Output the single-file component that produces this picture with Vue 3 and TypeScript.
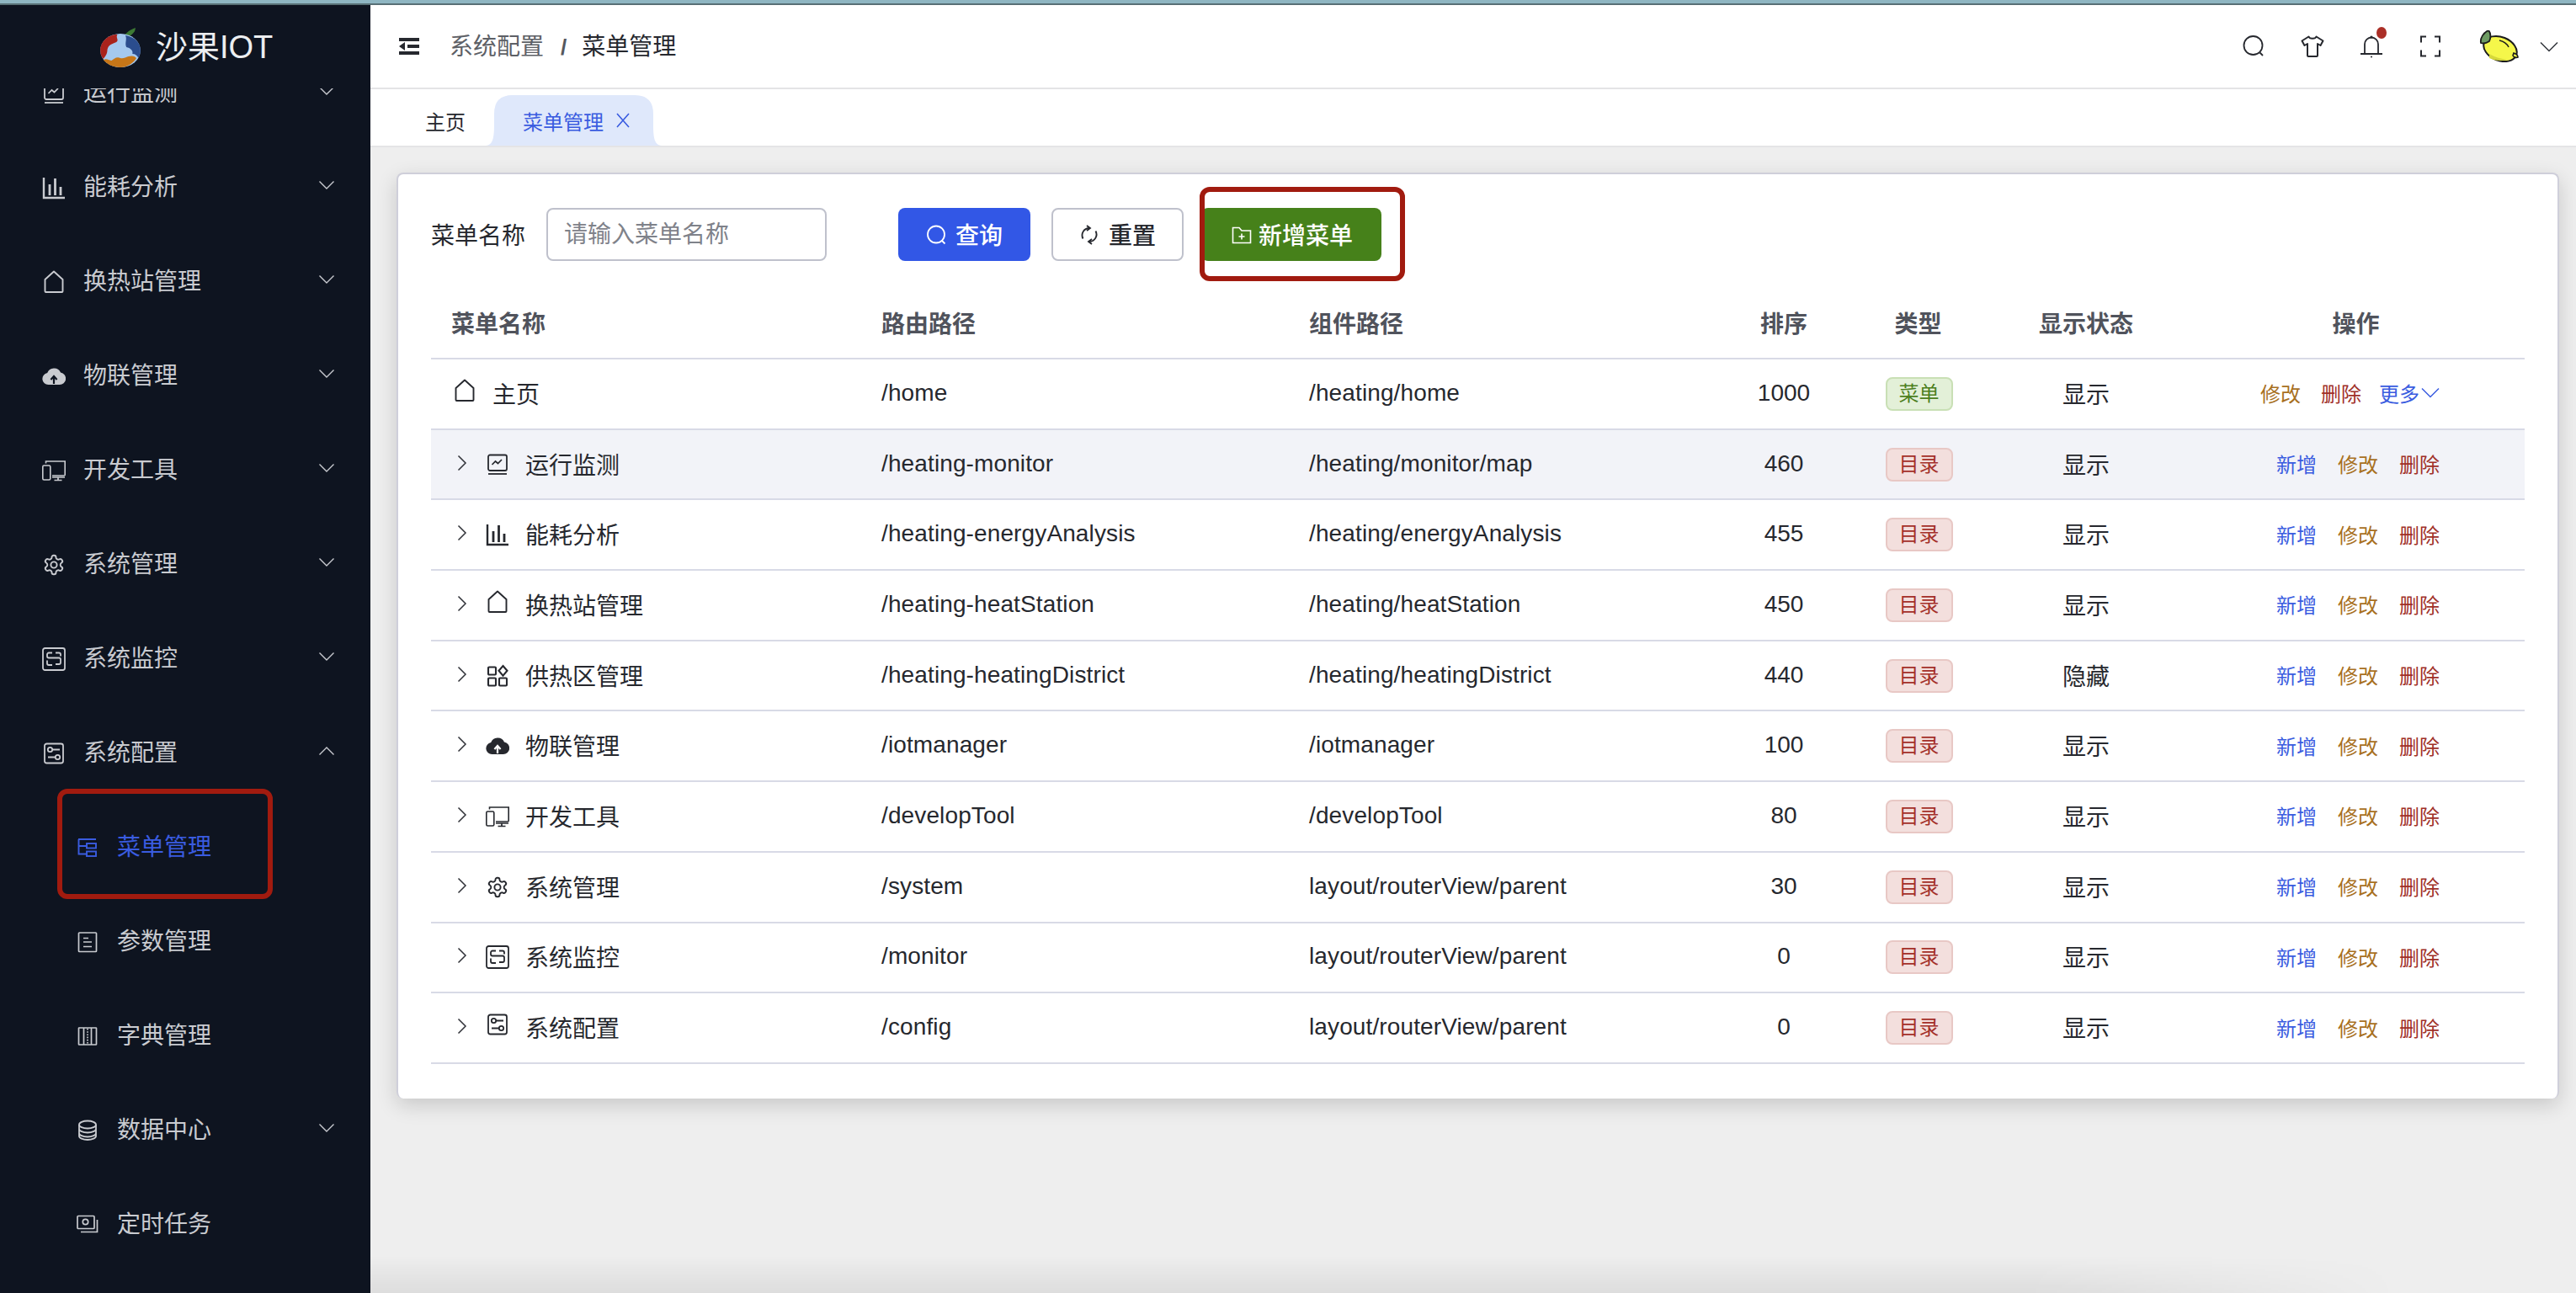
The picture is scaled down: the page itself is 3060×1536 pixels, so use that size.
<script setup lang="ts">
interface MenuItem { label: string; icon: string; sub?: boolean; arrow?: 'down' | 'up'; active?: boolean }
interface Row { name: string; icon: string; path: string; comp: string; order: string; type: string; show: string; leaf?: boolean; hover?: boolean }

const icons: Record<string, string> = {
  monitor: '<rect x="3" y="2.500" width="22" height="18.500" rx="2" fill="none" stroke="currentColor" stroke-width="1.800"/><path d="M7.500 14l4-4 3 2.500 4.500-4.500" fill="none" stroke="currentColor" stroke-width="1.700"/><path d="M3 25h22" stroke="currentColor" stroke-width="1.800"/>',
  bars: '<path d="M2 2v24h25" fill="none" stroke="currentColor" stroke-width="2.400"/><path d="M9 10v13M15.500 3v20M22 13v10" fill="none" stroke="currentColor" stroke-width="2.800"/>',
  home: '<path d="M3.500 25V11L14 1.500 24.500 11v14a1 1 0 0 1-1 1h-19a1 1 0 0 1-1-1z" fill="none" stroke="currentColor" stroke-width="1.900" stroke-linejoin="round"/>',
  grid: '<g fill="none" stroke="currentColor" stroke-width="2.100"><rect x="3" y="3.500" width="9" height="9" rx="1"/><rect x="3" y="16.500" width="9" height="9" rx="1"/><rect x="16" y="16.500" width="9" height="9" rx="1"/><path d="M20.500 2l5 5.800-5 5.800-5-5.800z"/></g>',
  cloud: '<path d="M7.500 24a7 7 0 0 1-1.300-13.900A8.500 8.500 0 0 1 22 9.500 7.300 7.300 0 0 1 20.500 24z" fill="currentColor"/><path d="M14 23v-8.500M10.400 18L14 14l3.600 4" fill="none" stroke="var(--icon-knock, #fff)" stroke-width="2.200"/>',
  device: '<g fill="none" stroke="currentColor" stroke-width="1.600"><rect x="0.800" y="8" width="9" height="17" rx="1.500"/><path d="M4.500 5.500V3h22.700v16a1 1 0 0 1-1 1H12"/><path d="M12 22h15M14.500 25.500h9M19 22v3.500" stroke-width="1.700"/></g>',
  gear: '<g transform="translate(.500 .500) scale(1.125)" fill="none" stroke="currentColor" stroke-width="1.700"><path d="M12.220 2h-.44a2 2 0 0 0-2 2v.18a2 2 0 0 1-1 1.730l-.43.25a2 2 0 0 1-2 0l-.15-.08a2 2 0 0 0-2.730.73l-.22.38a2 2 0 0 0 .73 2.730l.15.1a2 2 0 0 1 1 1.720v.51a2 2 0 0 1-1 1.740l-.15.09a2 2 0 0 0-.73 2.730l.22.38a2 2 0 0 0 2.730.73l.15-.08a2 2 0 0 1 2 0l.43.25a2 2 0 0 1 1 1.730V20a2 2 0 0 0 2 2h.44a2 2 0 0 0 2-2v-.18a2 2 0 0 1 1-1.730l.43-.25a2 2 0 0 1 2 0l.15.08a2 2 0 0 0 2.730-.73l.22-.39a2 2 0 0 0-.73-2.730l-.15-.08a2 2 0 0 1-1-1.740v-.5a2 2 0 0 1 1-1.740l.15-.09a2 2 0 0 0 .73-2.730l-.22-.38a2 2 0 0 0-2.730-.73l-.15.08a2 2 0 0 1-2 0l-.43-.25a2 2 0 0 1-1-1.730V4a2 2 0 0 0-2-2z"/><circle cx="12" cy="12" r="3.200"/></g>',
  chain: '<g fill="none" stroke="currentColor" stroke-width="1.800"><rect x="1" y="1" width="26" height="26" rx="2.500"/><path d="M12 6.500H8a2 2 0 0 0-2 2v2a2 2 0 0 0 2 2h12a2 2 0 0 1 2 2v3.500a2 2 0 0 1-2 2h-4M16 6.500h4a2 2 0 0 1 2 2v2M6 15.500v3.500a2 2 0 0 0 2 2h4"/></g>',
  config: '<g fill="none" stroke="currentColor" stroke-width="1.800"><rect x="3" y="2.500" width="22" height="23" rx="2.500"/><circle cx="9.500" cy="9.500" r="2.700"/><path d="M12.200 9.500H21M7 18.500h8.800"/><circle cx="18.500" cy="18.500" r="2.700"/></g>',
  tree: '<g fill="none" stroke="currentColor" stroke-width="1.900"><path d="M3.500 4v17.500h9M3.500 12h9M3 4h21"/><rect x="13" y="9" width="11" height="5.500"/><rect x="13" y="18.500" width="11" height="5.500"/></g>',
  doc: '<g fill="none" stroke="currentColor" stroke-width="1.700"><rect x="3.500" y="3" width="21" height="22.500" rx=".8"/><path d="M9 9.500h6M9 14h10M9 19.500h10"/></g>',
  dict: '<g fill="none" stroke="currentColor" stroke-width="1.700"><rect x="3.500" y="4" width="21" height="20" rx=".5"/><path d="M9.500 4v20M18.500 4v20"/><path d="M14 5v18" stroke-dasharray="1.600 1.600"/></g>',
  db: '<g fill="none" stroke="currentColor" stroke-width="1.800"><ellipse cx="14" cy="7" rx="10" ry="4.500"/><path d="M4 7v5c0 2.500 4.500 4.500 10 4.500s10-2 10-4.500V7M4 12v5c0 2.500 4.500 4.500 10 4.500s10-2 10-4.500v-5M4 17v3.500C4 23 8.500 25 14 25s10-2 10-4.500V17"/></g>',
  cron: '<g fill="none" stroke="currentColor" stroke-width="1.700"><rect x="2" y="3.500" width="20" height="15" rx="1"/><circle cx="11.500" cy="10.500" r="3.200"/><path d="M6 22.500h19.500V8"/></g>',
}

const menu: MenuItem[] = [
  { label: '运行监测', icon: 'monitor', arrow: 'down' },
  { label: '能耗分析', icon: 'bars', arrow: 'down' },
  { label: '换热站管理', icon: 'home', arrow: 'down' },
  { label: '物联管理', icon: 'cloud', arrow: 'down' },
  { label: '开发工具', icon: 'device', arrow: 'down' },
  { label: '系统管理', icon: 'gear', arrow: 'down' },
  { label: '系统监控', icon: 'chain', arrow: 'down' },
  { label: '系统配置', icon: 'config', arrow: 'up' },
  { label: '菜单管理', icon: 'tree', sub: true, active: true },
  { label: '参数管理', icon: 'doc', sub: true },
  { label: '字典管理', icon: 'dict', sub: true },
  { label: '数据中心', icon: 'db', sub: true, arrow: 'down' },
  { label: '定时任务', icon: 'cron', sub: true },
]

const rows: Row[] = [
  { name: '主页', icon: 'home', path: '/home', comp: '/heating/home', order: '1000', type: '菜单', show: '显示', leaf: true },
  { name: '运行监测', icon: 'monitor', path: '/heating-monitor', comp: '/heating/monitor/map', order: '460', type: '目录', show: '显示', hover: true },
  { name: '能耗分析', icon: 'bars', path: '/heating-energyAnalysis', comp: '/heating/energyAnalysis', order: '455', type: '目录', show: '显示' },
  { name: '换热站管理', icon: 'home', path: '/heating-heatStation', comp: '/heating/heatStation', order: '450', type: '目录', show: '显示' },
  { name: '供热区管理', icon: 'grid', path: '/heating-heatingDistrict', comp: '/heating/heatingDistrict', order: '440', type: '目录', show: '隐藏' },
  { name: '物联管理', icon: 'cloud', path: '/iotmanager', comp: '/iotmanager', order: '100', type: '目录', show: '显示' },
  { name: '开发工具', icon: 'device', path: '/developTool', comp: '/developTool', order: '80', type: '目录', show: '显示' },
  { name: '系统管理', icon: 'gear', path: '/system', comp: 'layout/routerView/parent', order: '30', type: '目录', show: '显示' },
  { name: '系统监控', icon: 'chain', path: '/monitor', comp: 'layout/routerView/parent', order: '0', type: '目录', show: '显示' },
  { name: '系统配置', icon: 'config', path: '/config', comp: 'layout/routerView/parent', order: '0', type: '目录', show: '显示' },
]

const columns: string[] = ['菜单名称', '路由路径', '组件路径', '排序', '类型', '显示状态', '操作']
</script>

<template>
  <div class="page">
    <div class="strip"></div>
    <div class="shell">
      <aside class="sidebar">
        <div class="logo">
          <svg class="apple" viewBox="4 0 42 47" width="50" height="47" preserveAspectRatio="none">
            <path d="M26 13C30 7 33 3 40 0c0 6-5 10-12 14z" fill="#3d7a34"/>
            <circle cx="25" cy="27" r="20" fill="#a5c9ef"/>
            <path d="M5 27C5 16 13 8 22 8c-2 4 2 6-1 9-4 2-8 3-9 9 0 5-2 8-4 11-2-3-3-6-3-10z" fill="#a9231c"/>
            <path d="M30 9c10 2 15 9 15 18 0 3-1 7-2 9-1-3-3-5-6-5 1-4-2-7-6-8-2-5 1-9-1-14z" fill="#2b4d8e"/>
            <path d="M8 38c3-2 5 0 8 1 3-2 5-5 9-3 3 1 5-1 8-2 3-1 6-1 8 2-3 6-9 11-16 11S11 43 8 38z" fill="#c67618"/>
          </svg>
          <span class="brand">沙果IOT</span>
        </div>
        <div class="menu-clip">
          <nav class="menu">
            <div
              v-for="item in menu"
              :key="item.label"
              class="menu-item"
              :class="{ sub: item.sub, active: item.active }"
            >
              <svg class="mi-icon" viewBox="0 0 28 28" width="28" height="28" v-html="icons[item.icon]"></svg>
              <span class="mi-text">{{ item.label }}</span>
              <svg v-if="item.arrow" class="mi-arrow" viewBox="0 0 20 12" width="20" height="12">
                <path :d="item.arrow === 'down' ? 'M1.500 1.500L10 10l8.500-8.500' : 'M1.500 10.500L10 2l8.500 8.500'" fill="none" stroke="currentColor" stroke-width="1.400"/>
              </svg>
              <span v-if="item.active" class="mark mark-menu"></span>
            </div>
          </nav>
        </div>
      </aside>

      <div class="content">
        <header class="topbar">
          <svg class="burger" viewBox="0 0 24 20" width="24" height="20">
            <path d="M0 2h24M10 10h14M0 18h24" stroke="#26282e" stroke-width="4"/>
            <path d="M7 5v10L0 10z" fill="#26282e"/>
          </svg>
          <div class="crumbs">
            <span class="crumb-parent">系统配置</span>
            <span class="crumb-sep">/</span>
            <span class="crumb-current">菜单管理</span>
          </div>
          <div class="tools">
            <svg class="tool" viewBox="0 0 28 28" width="28" height="28">
              <circle cx="13.500" cy="13" r="11" fill="none" stroke="#26282e" stroke-width="1.800"/>
              <path d="M21.500 21.500L25 25" stroke="#26282e" stroke-width="1.800"/>
            </svg>
            <svg class="tool" viewBox="0 0 28 28" width="28" height="28">
              <path d="M9.500 2.500c1 3 8 3 9 0l8 5-3 5.500-3.500-2V25a1 1 0 0 1-1 1H9a1 1 0 0 1-1-1V11l-3.500 2-3-5.500z" fill="none" stroke="#26282e" stroke-width="2" stroke-linejoin="round"/>
            </svg>
            <div class="bell">
              <svg viewBox="0 0 28 28" width="28" height="28" class="tool">
                <path d="M6 23V11.500a8 8 0 0 1 16 0V23M1 23h26" fill="none" stroke="#26282e" stroke-width="1.800"/>
                <circle cx="14" cy="3" r="1.600" fill="#26282e"/>
                <circle cx="14" cy="26.500" r="1" fill="#26282e"/>
              </svg>
              <span class="dot"></span>
            </div>
            <svg class="tool" viewBox="0 0 28 28" width="28" height="28">
              <path d="M9 2.500H3v7M19 2.500h6v7M9 25.500H3v-7M19 25.500h6v-7" fill="none" stroke="#26282e" stroke-width="2"/>
            </svg>
            <svg class="lemon" viewBox="0 0 48 38" width="48" height="38">
              <ellipse cx="25" cy="22" rx="20.500" ry="14" transform="rotate(22 25 22)" fill="#f5f74a" stroke="#1c1c1c" stroke-width="2"/>
              <path d="M41 27c3 1 5 3 5 5-2 1-5 0-6-2z" fill="#f5f74a" stroke="#1c1c1c" stroke-width="1.600"/>
              <path d="M12 33c6 3 14 4 22 2-8-1-15-3-22-7z" fill="#d6d83a"/>
              <path d="M2 15C1 9 5 3 11 0c3 3 3 9 1 13-3 2-7 3-10 2z" fill="#6e9b63" stroke="#1c1c1c" stroke-width="1.800"/>
              <path d="M24 12c5 1 9 4 11 8" fill="none" stroke="#1c1c1c" stroke-width="1.500"/>
            </svg>
            <svg class="caret" viewBox="0 0 22 13" width="22" height="13">
              <path d="M1 1.500l10 10 10-10" fill="none" stroke="#33363c" stroke-width="1.500"/>
            </svg>
          </div>
        </header>

        <div class="tabs">
          <span class="tab">主页</span>
          <div class="tab-active">
            <span>菜单管理</span>
            <svg viewBox="0 0 16 18" width="16" height="18">
              <path d="M1 1l14 16M15 1L1 17" stroke="currentColor" stroke-width="1.600" fill="none"/>
            </svg>
          </div>
        </div>

        <main class="main">
          <section class="card">
            <div class="filters">
              <label class="f-label">菜单名称</label>
              <input class="f-input" type="text" placeholder="请输入菜单名称" />
              <button class="btn btn-primary" type="button">
                <svg viewBox="0 0 24 24" width="24" height="24">
                  <circle cx="12" cy="11.500" r="10" fill="none" stroke="#fff" stroke-width="1.800"/>
                  <path d="M19 19l3.500 3.500" stroke="#fff" stroke-width="1.800"/>
                </svg>
                <span>查询</span>
              </button>
              <button class="btn btn-plain" type="button">
                <svg viewBox="0 0 24 24" width="24" height="24">
                  <path d="M12 4a8.500 8.500 0 0 0-7.500 12.500M12 20a8.500 8.500 0 0 0 7.500-12.500" fill="none" stroke="#26282e" stroke-width="1.900"/>
                  <path d="M9 1l4 3-4 3M15 17l-4 3 4 3" fill="none" stroke="#26282e" stroke-width="1.800"/>
                </svg>
                <span>重置</span>
              </button>
              <button class="btn btn-success" type="button">
                <svg viewBox="0 0 24 24" width="24" height="24">
                  <path d="M1.500 3.500h7.500l3 3.500h10.500v14.500h-21z" fill="none" stroke="#fff" stroke-width="1.600"/>
                  <path d="M12 10.500v7M8.500 14h7" stroke="#fff" stroke-width="1.600"/>
                </svg>
                <span>新增菜单</span>
                <span class="mark mark-btn"></span>
              </button>
            </div>

            <div class="table">
              <div class="tr th">
                <div v-for="(c, i) in columns" :key="c" class="cell" :class="{ center: i > 2, first: i === 0 }">{{ c }}</div>
              </div>
              <div v-for="r in rows" :key="r.name" class="tr td" :class="{ hover: r.hover }">
                <div class="cell name" :class="{ leaf: r.leaf }">
                  <svg v-if="!r.leaf" class="expand" viewBox="0 0 12 20" width="12" height="20">
                    <path d="M1.500 1.500L10 10l-8.500 8.500" fill="none" stroke="#303238" stroke-width="1.500"/>
                  </svg>
                  <svg class="row-icon" :class="'ic-' + r.icon" viewBox="0 0 28 28" width="28" height="28" v-html="icons[r.icon]"></svg>
                  <span class="name-text">{{ r.name }}</span>
                </div>
                <div class="cell latin">{{ r.path }}</div>
                <div class="cell latin">{{ r.comp }}</div>
                <div class="cell center">{{ r.order }}</div>
                <div class="cell center">
                  <span class="tag" :class="r.leaf ? 'tag-green' : 'tag-red'">{{ r.type }}</span>
                </div>
                <div class="cell center">{{ r.show }}</div>
                <div class="cell center">
                  <div v-if="r.leaf" class="ops ops-leaf">
                    <span class="op-edit">修改</span>
                    <span class="op-del">删除</span>
                    <span class="op-add more">更多
                      <svg viewBox="0 0 22 13" width="22" height="13">
                        <path d="M1 1.500l10 10 10-10" fill="none" stroke="currentColor" stroke-width="1.500"/>
                      </svg>
                    </span>
                  </div>
                  <div v-else class="ops">
                    <span class="op-add">新增</span>
                    <span class="op-edit">修改</span>
                    <span class="op-del">删除</span>
                  </div>
                </div>
              </div>
            </div>
          </section>
          <div class="bottom-shade"></div>
        </main>
      </div>
    </div>
  </div>
</template>

<style>
html, body { margin: 0; padding: 0; background: #eeeeee; }
</style>

<style scoped>
.page {
  width: 3060px;
  height: 1536px;
  overflow: hidden;
  display: flex;
  flex-direction: column;
  font-family: "Liberation Sans", "Noto Sans CJK SC", sans-serif;
  font-size: 28px;
  color: #26282e;
}
.strip {
  height: 6px;
  flex: none;
  background: linear-gradient(to bottom, #8fb6c2 0 4px, #586f75 4px 6px);
}
.shell { flex: 1; display: flex; min-height: 0; }

.sidebar {
  width: 440px;
  flex: none;
  background: #0e1420;
  display: flex;
  flex-direction: column;
  color: #c9cbd0;
}
.logo {
  height: 99px;
  flex: none;
  display: flex;
  align-items: center;
  padding-left: 118px;
  gap: 17px;
  box-sizing: border-box;
  background: #0e1420;
}
.apple { margin-top: 2px; flex: none; }
.brand { font-size: 38px; color: #eceef0; font-weight: 400; line-height: 1; }
.menu-clip { flex: 1; overflow: hidden; min-height: 0; }
.menu { margin-top: -50px; }
.menu-item {
  position: relative;
  height: 112px;
  display: flex;
  align-items: center;
  padding: 0 42px 0 50px;
  gap: 21px;
}
.menu-item.sub { padding-left: 90px; }
.menu-item.active { color: #3a5ce0; }
.mi-text { line-height: 1; }
.mi-icon { flex: none; --icon-knock: #0e1420; }
.mi-arrow { margin-left: auto; margin-top: -6px; }

.mark {
  position: absolute;
  box-sizing: border-box;
  border: 6px solid #a11b0f;
  pointer-events: none;
}
.mark-menu { left: 68px; top: -14px; width: 256px; height: 131px; border-radius: 12px; }
.mark-btn { left: -2px; top: -25px; width: 244px; height: 112px; border-radius: 12px; }

.content { flex: 1; min-width: 0; display: flex; flex-direction: column; }
.topbar {
  height: 100px;
  flex: none;
  box-sizing: border-box;
  border-bottom: 2px solid #e4e4e6;
  background: #fff;
  display: flex;
  align-items: center;
  padding-left: 34px;
}
.burger { flex: none; }
.crumbs { display: flex; align-items: center; margin: 2px 0 0 36px; line-height: 1; }
.crumb-parent { color: #5d6066; }
.crumb-sep { margin: 0 18px 0 20px; font-size: 26px; color: #55585e; font-weight: 700; }
.crumb-current { color: #26282e; }
.tools { margin-left: auto; display: flex; align-items: center; padding-right: 21px; }
.tool { display: block; flex: none; }
.tools > .tool { margin-right: 42px; }
.bell { position: relative; margin-right: 42px; }
.dot {
  position: absolute;
  left: 20px;
  top: -9px;
  width: 12px;
  height: 14px;
  border-radius: 50%;
  background: #ab2f27;
}
.tools > .lemon { margin-left: 2px; margin-right: 0; }
.caret { margin-left: 24px; }

.tabs {
  height: 69px;
  flex: none;
  box-sizing: border-box;
  background: #fff;
  border-bottom: 2px solid #e4e4e6;
  display: flex;
  align-items: flex-end;
  padding-left: 65px;
}
.tab {
  width: 48px;
  height: 60px;
  display: flex;
  align-items: center;
  font-size: 24px;
  color: #26282e;
}
.tab-active {
  width: 209px;
  height: 60px;
  margin-left: 24px;
  box-sizing: border-box;
  padding-left: 44px;
  display: flex;
  align-items: center;
  gap: 15px;
  font-size: 24px;
  color: #3a5ce0;
  background: #dfe8fb;
  clip-path: path('M0 60 C10 60 10 46 10 32 V22 Q10 0 32 0 H177 Q199 0 199 22 V32 C199 46 199 60 209 60 Z');
}

.main {
  position: relative;
  flex: 1;
  min-height: 0;
  background: #eeeeee;
  padding: 30px 20px 0 31px;
}
.card {
  position: relative;
  box-sizing: border-box;
  height: 1100px;
  background: #fff;
  border: 2px solid #cfcfda;
  border-bottom: none;
  border-radius: 8px;
  padding: 40px 39px 0;
  box-shadow: 0 8px 24px rgba(0, 0, 0, 0.16);
}
.filters { display: flex; align-items: center; height: 63px; margin-bottom: 32px; }
.f-label { width: 112px; flex: none; color: #26282e; padding-bottom: 2px; }
.f-input {
  width: 333px;
  height: 63px;
  flex: none;
  box-sizing: border-box;
  margin-left: 25px;
  padding: 0 20px 0 19px;
  border: 2px solid #bfc1cc;
  border-radius: 8px;
  outline: none;
  font: inherit;
  color: #26282e;
  background: #fff;
}
.f-input::placeholder { color: #7f828a; opacity: 1; }
.btn {
  position: relative;
  height: 63px;
  flex: none;
  box-sizing: border-box;
  display: flex;
  align-items: center;
  justify-content: center;
  gap: 11px;
  border-radius: 8px;
  border: none;
  padding: 0 0 2px;
  font: inherit;
  font-weight: 500;
}
.btn svg { margin-top: 2px; }
.btn-primary { width: 157px; margin-left: 85px; background: #3257e6; color: #fff; }
.btn-plain { width: 157px; margin-left: 25px; background: #fff; color: #26282e; border: 2px solid #bfc1cc; }
.btn-success { width: 214px; margin-left: 21px; padding-left: 2px; background: #46811a; color: #fff; gap: 8px; }

.tr {
  display: grid;
  grid-template-columns: 511px 508px 508px 160px 159px 240px 1fr;
  box-sizing: border-box;
  border-bottom: 2px solid #d8dae6;
}
.th { height: 85px; color: #50535c; font-weight: 700; }
.td { height: 83.7px; }
.td.hover { background: #f2f3f8; }
.cell {
  display: flex;
  align-items: center;
  padding: 0 0 1px 24px;
  min-width: 0;
  white-space: nowrap;
}
.td .cell { padding-bottom: 2px; }
.cell.latin { letter-spacing: 0.12px; }
.cell.center { justify-content: center; padding-left: 0; }
.td .cell.name { padding-left: 31px; }
.td .cell.leaf { padding-left: 26px; }
.expand { flex: none; margin-top: -2px; }
.row-icon { flex: none; margin: 2px 0 0 22px; --icon-knock: #fff; }
.row-icon.ic-home, .row-icon.ic-config { margin-top: -6px; }
.td.hover .row-icon { --icon-knock: #f2f3f8; }
.name.leaf .row-icon { margin-left: 0; }
.name-text { margin-left: 19px; }
.name.leaf .name-text { margin-left: 19px; }

.tag {
  box-sizing: border-box;
  width: 80px;
  height: 40px;
  display: flex;
  align-items: center;
  justify-content: center;
  border-radius: 8px;
  font-size: 24px;
  line-height: 1;
  margin: 2px 0 0 2px;
}
.tag-green { background: #e3f0d8; border: 2px solid #c9e0b5; color: #4d7f1e; }
.tag-red { background: #f3dfdd; border: 2px solid #e8c8c5; color: #a4302a; }

.ops { display: flex; align-items: center; gap: 25px; font-size: 24px; margin-left: 5px; }
.ops-leaf { gap: 24px; margin-left: -14px; }
.op-add { color: #3a5ce0; }
.op-edit { color: #a8701f; }
.op-del { color: #a03028; }
.more { display: flex; align-items: center; gap: 2px; margin-left: -3px; }

.bottom-shade {
  position: absolute;
  left: 0;
  right: 0;
  bottom: 0;
  height: 44px;
  background: linear-gradient(to bottom, transparent, rgba(0, 0, 0, 0.07));
  -webkit-mask-image: linear-gradient(to right, #000 75%, transparent 92%);
  mask-image: linear-gradient(to right, #000 75%, transparent 92%);
  pointer-events: none;
}
</style>
